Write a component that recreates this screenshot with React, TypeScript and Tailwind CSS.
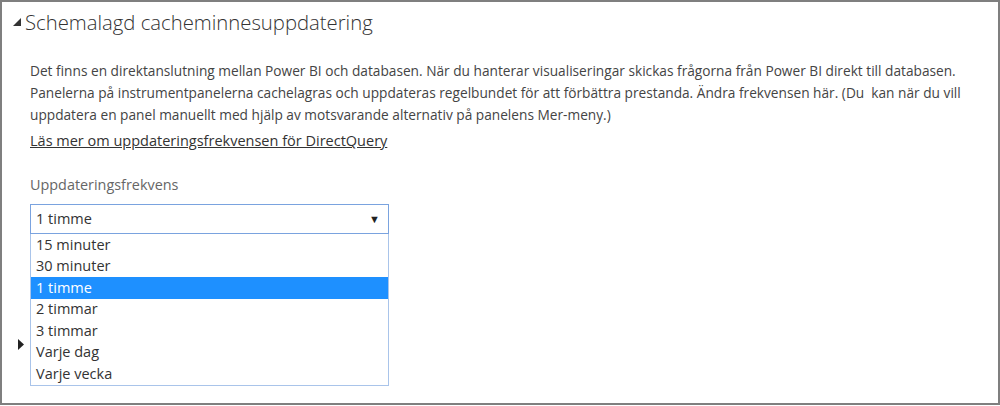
import React from "react";

const options = ["15 minuter", "30 minuter", "1 timme", "2 timmar", "3 timmar", "Varje dag", "Varje vecka"];

export default function App() {
  return (
    <div
      className="w-[1000px] h-[405px] border-2 border-[#7f7f7f] bg-white relative overflow-hidden"
      style={{ fontFamily: '"Open Sans", "Noto Sans", sans-serif' }}
    >
      <div className="flex items-center h-[40px] pl-[11px] pt-[1px]">
        <svg width="8" height="8" viewBox="0 0 8 8" className="mr-[4px] mb-[2px]">
          <polygon points="8,0 8,8 0,8" fill="#333" />
        </svg>
        <span className="text-[20.3px] text-[#333] font-light">Schemalagd cacheminnesuppdatering</span>
      </div>
      <div className="pl-[28px] pt-[18px] text-[14.5px] text-[#444] leading-[22px]">
        <div className="whitespace-nowrap text-[13.7px]">
          <div>Det finns en direktanslutning mellan Power BI och databasen. När du hanterar visualiseringar skickas frågorna från Power BI direkt till databasen.</div>
          <div>Panelerna på instrumentpanelerna cachelagras och uppdateras regelbundet för att förbättra prestanda. Ändra frekvensen här. (Du&nbsp; kan när du vill</div>
          <div>uppdatera en panel manuellt med hjälp av motsvarande alternativ på panelens Mer-meny.)</div>
        </div>
        <a className="block mt-[4px] underline text-[#333]">Läs mer om uppdateringsfrekvensen för DirectQuery</a>
        <div className="mt-[22px] text-[#666] text-[14.4px]">Uppdateringsfrekvens</div>
        <div className="mt-[8px] w-[359px]">
          <div className="h-[30px] border border-[#7aa3df] flex items-center justify-between pl-[5px] pr-[8px] text-[#333]">
            <span>1 timme</span>
            <span className="text-[11px] text-[#222]">▼</span>
          </div>
          <div className="border border-t-0 border-[#a9c4ea]">
            {options.map((o) => (
              <div
                key={o}
                className={
                  "h-[21.5px] flex items-center pl-[5px] " +
                  (o === "1 timme" ? "bg-[#1e90ff] text-white" : "text-[#333]")
                }
              >
                {o}
              </div>
            ))}
          </div>
        </div>
      </div>
      <svg width="6" height="11" viewBox="0 0 6 11" className="absolute left-[16px] top-[337px]">
        <polygon points="0,0 6,5.5 0,11" fill="#222" />
      </svg>
    </div>
  );
}
